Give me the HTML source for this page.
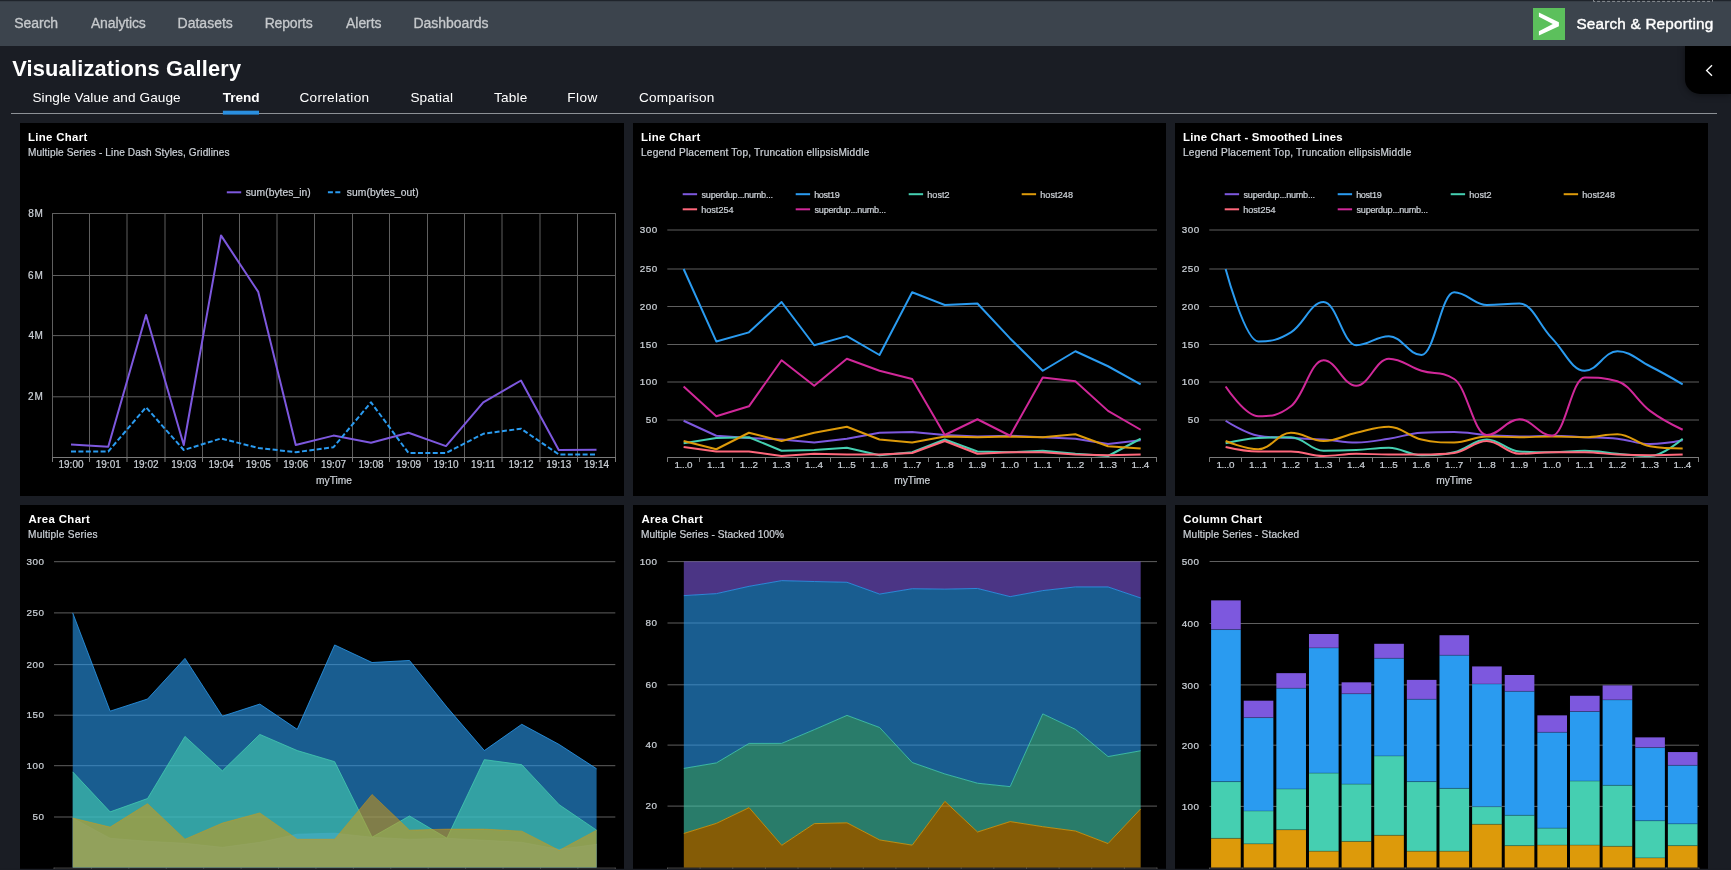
<!DOCTYPE html><html><head><meta charset="utf-8"><title>Visualizations Gallery</title><style>
html,body{margin:0;padding:0;background:#1a1d24;}
body{width:1731px;height:870px;overflow:hidden;position:relative;font-family:"Liberation Sans", sans-serif;}
svg{position:absolute;left:0;top:0;will-change:transform;}
svg text{font-family:"Liberation Sans", sans-serif;}
svg text.g{stroke:#cbd0d6;stroke-width:.22px;}
</style></head><body>
<svg width="1731" height="870" viewBox="0 0 1731 870">
<rect x="0" y="0" width="1731" height="46" fill="#3c444d"/>
<rect x="0" y="0" width="1731" height="1.2" fill="#1f242b"/>
<text x="14.37" y="28.3" font-size="14" fill="#c6c9cc" text-anchor="start" font-weight="normal" letter-spacing="-0.13" stroke="#c6c9cc" stroke-width="0.3">Search</text>
<text x="90.9" y="28.3" font-size="14" fill="#c6c9cc" text-anchor="start" font-weight="normal" letter-spacing="-0.13" stroke="#c6c9cc" stroke-width="0.3">Analytics</text>
<text x="177.58" y="28.3" font-size="14" fill="#c6c9cc" text-anchor="start" font-weight="normal" stroke="#c6c9cc" stroke-width="0.3">Datasets</text>
<text x="264.68" y="28.3" font-size="14" fill="#c6c9cc" text-anchor="start" font-weight="normal" letter-spacing="-0.17" stroke="#c6c9cc" stroke-width="0.3">Reports</text>
<text x="346.1" y="28.3" font-size="14" fill="#c6c9cc" text-anchor="start" font-weight="normal" letter-spacing="-0.08" stroke="#c6c9cc" stroke-width="0.3">Alerts</text>
<text x="413.38" y="28.3" font-size="14" fill="#c6c9cc" text-anchor="start" font-weight="normal" letter-spacing="-0.03" stroke="#c6c9cc" stroke-width="0.3">Dashboards</text>
<rect x="1533" y="8" width="32" height="32" fill="#5cc05c"/>
<path d="M1538.9 12.4 L1558.9 22.2 L1558.9 26.3 L1538.9 35.6 L1538.9 31.3 L1552.8 23.9 L1538.9 16.7 Z" fill="#ffffff"/>
<text x="1576.41" y="29.4" font-size="15.3" fill="#ffffff" text-anchor="start" font-weight="normal" letter-spacing="0.2" stroke="#ffffff" stroke-width="0.4">Search &amp; Reporting</text>
<path d="M1593.5 0 V1.4 H1712.5 V0" fill="none" stroke="#a6aaae" stroke-opacity="0.75" stroke-width="1" stroke-dasharray="3 2"/>
<defs><filter id="bl" x="-30%" y="-30%" width="160%" height="160%"><feGaussianBlur stdDeviation="3.5"/></filter><clipPath id="cpb"><rect x="1660" y="46" width="71" height="70"/></clipPath></defs>
<g clip-path="url(#cpb)"><path d="M1685 46 H1731 V95 H1700 A15 15 0 0 1 1685 80 Z" fill="#000000" fill-opacity="0.45" filter="url(#bl)"/></g>
<path d="M1685 46 H1731 V94 H1700 A15 15 0 0 1 1685 79 Z" fill="#000000"/>
<path d="M1712 65.3 L1706.6 70.5 L1712 75.7" fill="none" stroke="#ffffff" stroke-width="1.3"/>
<text x="12.19" y="75.8" font-size="21.8" fill="#ffffff" text-anchor="start" font-weight="bold" letter-spacing="0.19">Visualizations Gallery</text>
<text x="32.39" y="102.1" font-size="13.6" fill="#ffffff" text-anchor="start" font-weight="normal" letter-spacing="0.09">Single Value and Gauge</text>
<text x="222.76" y="102.1" font-size="13.6" fill="#ffffff" text-anchor="start" font-weight="bold" letter-spacing="-0.04">Trend</text>
<text x="299.42" y="102.1" font-size="13.6" fill="#ffffff" text-anchor="start" font-weight="normal" letter-spacing="0.32">Correlation</text>
<text x="410.39" y="102.1" font-size="13.6" fill="#ffffff" text-anchor="start" font-weight="normal" letter-spacing="0.17">Spatial</text>
<text x="493.93" y="102.1" font-size="13.6" fill="#ffffff" text-anchor="start" font-weight="normal" letter-spacing="0.25">Table</text>
<text x="567.31" y="102.1" font-size="13.6" fill="#ffffff" text-anchor="start" font-weight="normal" letter-spacing="0.47">Flow</text>
<text x="638.92" y="102.1" font-size="13.6" fill="#ffffff" text-anchor="start" font-weight="normal" letter-spacing="0.23">Comparison</text>
<line x1="11" x2="1717" y1="113.5" y2="113.5" stroke="#8d9196" stroke-width="1"/>
<rect x="222.9" y="110.7" width="36.1" height="3.9" fill="#2a8fe0"/>
<rect x="20" y="123" width="604" height="373" fill="#000000"/>
<text x="28.06" y="140.9" font-size="11.4" fill="#ffffff" text-anchor="start" font-weight="bold" letter-spacing="0.32">Line Chart</text>
<text class="g" x="27.99" y="156.2" font-size="10.1" fill="#cbd0d6" text-anchor="start" font-weight="normal" letter-spacing="0.12">Multiple Series - Line Dash Styles, Gridlines</text>
<rect x="633" y="123" width="533" height="373" fill="#000000"/>
<text x="641.06" y="140.9" font-size="11.4" fill="#ffffff" text-anchor="start" font-weight="bold" letter-spacing="0.32">Line Chart</text>
<text class="g" x="640.99" y="156.2" font-size="10.1" fill="#cbd0d6" text-anchor="start" font-weight="normal" letter-spacing="0.21">Legend Placement Top, Truncation ellipsisMiddle</text>
<rect x="1175" y="123" width="533" height="373" fill="#000000"/>
<text x="1183.06" y="140.9" font-size="11.4" fill="#ffffff" text-anchor="start" font-weight="bold" letter-spacing="0.17">Line Chart - Smoothed Lines</text>
<text class="g" x="1182.99" y="156.2" font-size="10.1" fill="#cbd0d6" text-anchor="start" font-weight="normal" letter-spacing="0.21">Legend Placement Top, Truncation ellipsisMiddle</text>
<rect x="20" y="505" width="604" height="380" fill="#000000"/>
<text x="28.52" y="522.9" font-size="11.4" fill="#ffffff" text-anchor="start" font-weight="bold" letter-spacing="0.35">Area Chart</text>
<text class="g" x="27.99" y="538.2" font-size="10.1" fill="#cbd0d6" text-anchor="start" font-weight="normal" letter-spacing="0.24">Multiple Series</text>
<rect x="633" y="505" width="533" height="380" fill="#000000"/>
<text x="641.51" y="522.9" font-size="11.4" fill="#ffffff" text-anchor="start" font-weight="bold" letter-spacing="0.35">Area Chart</text>
<text class="g" x="640.99" y="538.2" font-size="10.1" fill="#cbd0d6" text-anchor="start" font-weight="normal" letter-spacing="0.09">Multiple Series - Stacked 100%</text>
<rect x="1175" y="505" width="533" height="380" fill="#000000"/>
<text x="1183.34" y="522.9" font-size="11.4" fill="#ffffff" text-anchor="start" font-weight="bold" letter-spacing="0.3">Column Chart</text>
<text class="g" x="1182.99" y="538.2" font-size="10.1" fill="#cbd0d6" text-anchor="start" font-weight="normal" letter-spacing="0.19">Multiple Series - Stacked</text>
<line x1="52" x2="616" y1="213.5" y2="213.5" stroke="#5f5f5f" stroke-width="1"/>
<line x1="52" x2="616" y1="275.5" y2="275.5" stroke="#5f5f5f" stroke-width="1"/>
<line x1="52" x2="616" y1="335.6" y2="335.6" stroke="#5f5f5f" stroke-width="1"/>
<line x1="52" x2="616" y1="396.8" y2="396.8" stroke="#5f5f5f" stroke-width="1"/>
<line x1="52.5" x2="52.5" y1="213.5" y2="457.5" stroke="#5f5f5f" stroke-width="1"/>
<line x1="52.5" x2="52.5" y1="457.5" y2="462" stroke="#7a7a7a" stroke-width="1"/>
<line x1="89.5" x2="89.5" y1="213.5" y2="457.5" stroke="#5f5f5f" stroke-width="1"/>
<line x1="89.5" x2="89.5" y1="457.5" y2="462" stroke="#7a7a7a" stroke-width="1"/>
<line x1="127" x2="127" y1="213.5" y2="457.5" stroke="#5f5f5f" stroke-width="1"/>
<line x1="127" x2="127" y1="457.5" y2="462" stroke="#7a7a7a" stroke-width="1"/>
<line x1="165" x2="165" y1="213.5" y2="457.5" stroke="#5f5f5f" stroke-width="1"/>
<line x1="165" x2="165" y1="457.5" y2="462" stroke="#7a7a7a" stroke-width="1"/>
<line x1="202.5" x2="202.5" y1="213.5" y2="457.5" stroke="#5f5f5f" stroke-width="1"/>
<line x1="202.5" x2="202.5" y1="457.5" y2="462" stroke="#7a7a7a" stroke-width="1"/>
<line x1="239.5" x2="239.5" y1="213.5" y2="457.5" stroke="#5f5f5f" stroke-width="1"/>
<line x1="239.5" x2="239.5" y1="457.5" y2="462" stroke="#7a7a7a" stroke-width="1"/>
<line x1="277" x2="277" y1="213.5" y2="457.5" stroke="#5f5f5f" stroke-width="1"/>
<line x1="277" x2="277" y1="457.5" y2="462" stroke="#7a7a7a" stroke-width="1"/>
<line x1="314.5" x2="314.5" y1="213.5" y2="457.5" stroke="#5f5f5f" stroke-width="1"/>
<line x1="314.5" x2="314.5" y1="457.5" y2="462" stroke="#7a7a7a" stroke-width="1"/>
<line x1="352.5" x2="352.5" y1="213.5" y2="457.5" stroke="#5f5f5f" stroke-width="1"/>
<line x1="352.5" x2="352.5" y1="457.5" y2="462" stroke="#7a7a7a" stroke-width="1"/>
<line x1="389.5" x2="389.5" y1="213.5" y2="457.5" stroke="#5f5f5f" stroke-width="1"/>
<line x1="389.5" x2="389.5" y1="457.5" y2="462" stroke="#7a7a7a" stroke-width="1"/>
<line x1="427.5" x2="427.5" y1="213.5" y2="457.5" stroke="#5f5f5f" stroke-width="1"/>
<line x1="427.5" x2="427.5" y1="457.5" y2="462" stroke="#7a7a7a" stroke-width="1"/>
<line x1="464.5" x2="464.5" y1="213.5" y2="457.5" stroke="#5f5f5f" stroke-width="1"/>
<line x1="464.5" x2="464.5" y1="457.5" y2="462" stroke="#7a7a7a" stroke-width="1"/>
<line x1="502" x2="502" y1="213.5" y2="457.5" stroke="#5f5f5f" stroke-width="1"/>
<line x1="502" x2="502" y1="457.5" y2="462" stroke="#7a7a7a" stroke-width="1"/>
<line x1="540" x2="540" y1="213.5" y2="457.5" stroke="#5f5f5f" stroke-width="1"/>
<line x1="540" x2="540" y1="457.5" y2="462" stroke="#7a7a7a" stroke-width="1"/>
<line x1="577.5" x2="577.5" y1="213.5" y2="457.5" stroke="#5f5f5f" stroke-width="1"/>
<line x1="577.5" x2="577.5" y1="457.5" y2="462" stroke="#7a7a7a" stroke-width="1"/>
<line x1="615.5" x2="615.5" y1="213.5" y2="457.5" stroke="#5f5f5f" stroke-width="1"/>
<line x1="615.5" x2="615.5" y1="457.5" y2="462" stroke="#7a7a7a" stroke-width="1"/>
<line x1="52" x2="616" y1="457.5" y2="457.5" stroke="#7a7a7a" stroke-width="1"/>
<text class="g" x="28.2" y="217.1" font-size="10" fill="#cbd0d6" text-anchor="start" font-weight="normal" letter-spacing="0.85">8M</text>
<text class="g" x="28.1" y="279.1" font-size="10" fill="#cbd0d6" text-anchor="start" font-weight="normal" letter-spacing="0.95">6M</text>
<text class="g" x="28.4" y="339.2" font-size="10" fill="#cbd0d6" text-anchor="start" font-weight="normal" letter-spacing="0.65">4M</text>
<text class="g" x="28.1" y="400.4" font-size="10" fill="#cbd0d6" text-anchor="start" font-weight="normal" letter-spacing="0.95">2M</text>
<text class="g" x="71" y="468.1" font-size="10" fill="#cbd0d6" text-anchor="middle" font-weight="normal">19:00</text>
<text class="g" x="108.25" y="468.1" font-size="10" fill="#cbd0d6" text-anchor="middle" font-weight="normal">19:01</text>
<text class="g" x="146" y="468.1" font-size="10" fill="#cbd0d6" text-anchor="middle" font-weight="normal">19:02</text>
<text class="g" x="183.75" y="468.1" font-size="10" fill="#cbd0d6" text-anchor="middle" font-weight="normal">19:03</text>
<text class="g" x="221" y="468.1" font-size="10" fill="#cbd0d6" text-anchor="middle" font-weight="normal">19:04</text>
<text class="g" x="258.25" y="468.1" font-size="10" fill="#cbd0d6" text-anchor="middle" font-weight="normal">19:05</text>
<text class="g" x="295.75" y="468.1" font-size="10" fill="#cbd0d6" text-anchor="middle" font-weight="normal">19:06</text>
<text class="g" x="333.5" y="468.1" font-size="10" fill="#cbd0d6" text-anchor="middle" font-weight="normal">19:07</text>
<text class="g" x="371" y="468.1" font-size="10" fill="#cbd0d6" text-anchor="middle" font-weight="normal">19:08</text>
<text class="g" x="408.5" y="468.1" font-size="10" fill="#cbd0d6" text-anchor="middle" font-weight="normal">19:09</text>
<text class="g" x="446" y="468.1" font-size="10" fill="#cbd0d6" text-anchor="middle" font-weight="normal">19:10</text>
<text class="g" x="483.25" y="468.1" font-size="10" fill="#cbd0d6" text-anchor="middle" font-weight="normal">19:11</text>
<text class="g" x="521" y="468.1" font-size="10" fill="#cbd0d6" text-anchor="middle" font-weight="normal">19:12</text>
<text class="g" x="558.75" y="468.1" font-size="10" fill="#cbd0d6" text-anchor="middle" font-weight="normal">19:13</text>
<text class="g" x="596.5" y="468.1" font-size="10" fill="#cbd0d6" text-anchor="middle" font-weight="normal">19:14</text>
<text class="g" x="334" y="484.2" font-size="10.2" fill="#cbd0d6" text-anchor="middle" font-weight="normal">myTime</text>
<path d="M71 444.6 L108.25 446.8 L146 315 L183.75 445 L221 235.4 L258.25 291.9 L295.75 445 L333.5 435.6 L371 442.8 L408.5 432.7 L446 446.1 L483.25 402.3 L521 380.5 L558.75 450 L596.5 449.7" fill="none" stroke="#7d58de" stroke-width="2" stroke-linejoin="round"/>
<path d="M71 451.5 L108.25 451.5 L146 407.3 L183.75 450 L221 438.5 L258.25 447.9 L295.75 452.2 L333.5 447.2 L371 402.3 L408.5 453 L446 453 L483.25 433.8 L521 428.7 L558.75 454.4 L596.5 454.4" fill="none" stroke="#2a9bf0" stroke-width="2" stroke-dasharray="5 2.4" stroke-linejoin="round"/>
<line x1="226.8" x2="241.2" y1="192.3" y2="192.3" stroke="#7d58de" stroke-width="2"/>
<text class="g" x="245.64" y="196.2" font-size="10.3" fill="#cbd0d6" text-anchor="start" font-weight="normal" letter-spacing="0.03">sum(bytes_in)</text>
<line x1="327.9" x2="340.4" y1="192.3" y2="192.3" stroke="#2a9bf0" stroke-width="2" stroke-dasharray="5 2.4"/>
<text class="g" x="346.74" y="196.2" font-size="10.3" fill="#cbd0d6" text-anchor="start" font-weight="normal" letter-spacing="0.07">sum(bytes_out)</text>
<line x1="667.3" x2="1157" y1="420" y2="420" stroke="#5f5f5f" stroke-width="1"/>
<line x1="667.3" x2="1157" y1="382" y2="382" stroke="#5f5f5f" stroke-width="1"/>
<line x1="667.3" x2="1157" y1="344.5" y2="344.5" stroke="#5f5f5f" stroke-width="1"/>
<line x1="667.3" x2="1157" y1="306.5" y2="306.5" stroke="#5f5f5f" stroke-width="1"/>
<line x1="667.3" x2="1157" y1="269" y2="269" stroke="#5f5f5f" stroke-width="1"/>
<line x1="667.3" x2="1157" y1="230" y2="230" stroke="#5f5f5f" stroke-width="1"/>
<text class="g" x="645.81" y="423.2" font-size="9.9" fill="#cbd0d6" text-anchor="start" font-weight="normal" letter-spacing="0.45">50</text>
<text class="g" x="639.86" y="385.2" font-size="9.9" fill="#cbd0d6" text-anchor="start" font-weight="normal" letter-spacing="0.45">100</text>
<text class="g" x="639.86" y="347.7" font-size="9.9" fill="#cbd0d6" text-anchor="start" font-weight="normal" letter-spacing="0.45">150</text>
<text class="g" x="639.86" y="309.7" font-size="9.9" fill="#cbd0d6" text-anchor="start" font-weight="normal" letter-spacing="0.45">200</text>
<text class="g" x="639.86" y="272.2" font-size="9.9" fill="#cbd0d6" text-anchor="start" font-weight="normal" letter-spacing="0.45">250</text>
<text class="g" x="639.86" y="233.2" font-size="9.9" fill="#cbd0d6" text-anchor="start" font-weight="normal" letter-spacing="0.45">300</text>
<line x1="667.3" x2="1157" y1="457.5" y2="457.5" stroke="#7a7a7a" stroke-width="1"/>
<line x1="667.5" x2="667.5" y1="457.5" y2="462" stroke="#7a7a7a" stroke-width="1"/>
<line x1="699.5" x2="699.5" y1="457.5" y2="462" stroke="#7a7a7a" stroke-width="1"/>
<line x1="732.5" x2="732.5" y1="457.5" y2="462" stroke="#7a7a7a" stroke-width="1"/>
<line x1="765.5" x2="765.5" y1="457.5" y2="462" stroke="#7a7a7a" stroke-width="1"/>
<line x1="797.5" x2="797.5" y1="457.5" y2="462" stroke="#7a7a7a" stroke-width="1"/>
<line x1="830.5" x2="830.5" y1="457.5" y2="462" stroke="#7a7a7a" stroke-width="1"/>
<line x1="863.5" x2="863.5" y1="457.5" y2="462" stroke="#7a7a7a" stroke-width="1"/>
<line x1="895.5" x2="895.5" y1="457.5" y2="462" stroke="#7a7a7a" stroke-width="1"/>
<line x1="928.5" x2="928.5" y1="457.5" y2="462" stroke="#7a7a7a" stroke-width="1"/>
<line x1="961.5" x2="961.5" y1="457.5" y2="462" stroke="#7a7a7a" stroke-width="1"/>
<line x1="993.5" x2="993.5" y1="457.5" y2="462" stroke="#7a7a7a" stroke-width="1"/>
<line x1="1026.5" x2="1026.5" y1="457.5" y2="462" stroke="#7a7a7a" stroke-width="1"/>
<line x1="1059.5" x2="1059.5" y1="457.5" y2="462" stroke="#7a7a7a" stroke-width="1"/>
<line x1="1091.5" x2="1091.5" y1="457.5" y2="462" stroke="#7a7a7a" stroke-width="1"/>
<line x1="1124.5" x2="1124.5" y1="457.5" y2="462" stroke="#7a7a7a" stroke-width="1"/>
<line x1="1156.5" x2="1156.5" y1="457.5" y2="462" stroke="#7a7a7a" stroke-width="1"/>
<text class="g" x="674.38" y="467.8" font-size="9.9" fill="#cbd0d6" text-anchor="start" font-weight="normal" letter-spacing="-0.29">1...0</text>
<text class="g" x="707.03" y="467.8" font-size="9.9" fill="#cbd0d6" text-anchor="start" font-weight="normal" letter-spacing="-0.27">1...1</text>
<text class="g" x="739.67" y="467.8" font-size="9.9" fill="#cbd0d6" text-anchor="start" font-weight="normal" letter-spacing="-0.25">1...2</text>
<text class="g" x="772.32" y="467.8" font-size="9.9" fill="#cbd0d6" text-anchor="start" font-weight="normal" letter-spacing="-0.28">1...3</text>
<text class="g" x="804.97" y="467.8" font-size="9.9" fill="#cbd0d6" text-anchor="start" font-weight="normal" letter-spacing="-0.32">1...4</text>
<text class="g" x="837.61" y="467.8" font-size="9.9" fill="#cbd0d6" text-anchor="start" font-weight="normal" letter-spacing="-0.28">1...5</text>
<text class="g" x="870.26" y="467.8" font-size="9.9" fill="#cbd0d6" text-anchor="start" font-weight="normal" letter-spacing="-0.28">1...6</text>
<text class="g" x="902.91" y="467.8" font-size="9.9" fill="#cbd0d6" text-anchor="start" font-weight="normal" letter-spacing="-0.25">1...7</text>
<text class="g" x="935.55" y="467.8" font-size="9.9" fill="#cbd0d6" text-anchor="start" font-weight="normal" letter-spacing="-0.28">1...8</text>
<text class="g" x="968.2" y="467.8" font-size="9.9" fill="#cbd0d6" text-anchor="start" font-weight="normal" letter-spacing="-0.27">1...9</text>
<text class="g" x="1000.85" y="467.8" font-size="9.9" fill="#cbd0d6" text-anchor="start" font-weight="normal" letter-spacing="-0.29">1...0</text>
<text class="g" x="1033.49" y="467.8" font-size="9.9" fill="#cbd0d6" text-anchor="start" font-weight="normal" letter-spacing="-0.27">1...1</text>
<text class="g" x="1066.14" y="467.8" font-size="9.9" fill="#cbd0d6" text-anchor="start" font-weight="normal" letter-spacing="-0.25">1...2</text>
<text class="g" x="1098.79" y="467.8" font-size="9.9" fill="#cbd0d6" text-anchor="start" font-weight="normal" letter-spacing="-0.28">1...3</text>
<text class="g" x="1131.43" y="467.8" font-size="9.9" fill="#cbd0d6" text-anchor="start" font-weight="normal" letter-spacing="-0.32">1...4</text>
<text class="g" x="912.15" y="484.2" font-size="10.2" fill="#cbd0d6" text-anchor="middle" font-weight="normal">myTime</text>
<path d="M683.62 420.75 L716.27 435.75 L748.92 438 L781.56 439.5 L814.21 442.5 L846.86 438.75 L879.5 432.75 L912.15 432 L944.8 435 L977.44 436.5 L1010.09 435.75 L1042.74 437.25 L1075.38 438.75 L1108.03 444 L1140.68 440.25" fill="none" stroke="#7d58de" stroke-width="2" stroke-linejoin="round"/>
<path d="M683.62 269 L716.27 341.46 L748.92 332.34 L781.56 302 L814.21 345.25 L846.86 336.14 L879.5 355 L912.15 292.25 L944.8 305 L977.44 303.5 L1010.09 338.42 L1042.74 370.75 L1075.38 351.25 L1108.03 366.25 L1140.68 384.28" fill="none" stroke="#2a9bf0" stroke-width="2" stroke-linejoin="round"/>
<path d="M683.62 443.25 L716.27 438 L748.92 437.25 L781.56 450.75 L814.21 450 L846.86 447.75 L879.5 455.25 L912.15 452.25 L944.8 439.5 L977.44 451.5 L1010.09 452.25 L1042.74 450.75 L1075.38 453.75 L1108.03 456 L1140.68 438.75" fill="none" stroke="#45cfb1" stroke-width="2" stroke-linejoin="round"/>
<path d="M683.62 441 L716.27 449.25 L748.92 432.75 L781.56 441 L814.21 432.75 L846.86 426.75 L879.5 439.5 L912.15 442.5 L944.8 436.5 L977.44 437.25 L1010.09 436.5 L1042.74 437.25 L1075.38 434.25 L1108.03 446.25 L1140.68 448.5" fill="none" stroke="#dd9a0a" stroke-width="2" stroke-linejoin="round"/>
<path d="M683.62 447 L716.27 451.5 L748.92 451.5 L781.56 456 L814.21 453.75 L846.86 454.5 L879.5 454.5 L912.15 453 L944.8 441 L977.44 453.75 L1010.09 452.25 L1042.74 452.25 L1075.38 454.5 L1108.03 455.25 L1140.68 454.5" fill="none" stroke="#ff677b" stroke-width="2" stroke-linejoin="round"/>
<path d="M683.62 386.56 L716.27 416.2 L748.92 406.32 L781.56 360.25 L814.21 385.8 L846.86 358.75 L879.5 370.75 L912.15 379 L944.8 435 L977.44 419.24 L1010.09 435.75 L1042.74 377.5 L1075.38 381.25 L1108.03 410.88 L1140.68 429.75" fill="none" stroke="#d02899" stroke-width="2" stroke-linejoin="round"/>
<line x1="682.7" x2="697.1" y1="194.2" y2="194.2" stroke="#7d58de" stroke-width="2"/>
<text class="g" x="701.57" y="197.6" font-size="9.1" fill="#cbd0d6" text-anchor="start" font-weight="normal" letter-spacing="-0.26">superdup...numb...</text>
<line x1="795.7" x2="810.1" y1="194.2" y2="194.2" stroke="#2a9bf0" stroke-width="2"/>
<text class="g" x="814.16" y="197.6" font-size="9.1" fill="#cbd0d6" text-anchor="start" font-weight="normal" letter-spacing="-0.35">host19</text>
<line x1="908.7" x2="923.1" y1="194.2" y2="194.2" stroke="#45cfb1" stroke-width="2"/>
<text class="g" x="927.16" y="197.6" font-size="9.1" fill="#cbd0d6" text-anchor="start" font-weight="normal" letter-spacing="0.06">host2</text>
<line x1="1021.7" x2="1036.1" y1="194.2" y2="194.2" stroke="#dd9a0a" stroke-width="2"/>
<text class="g" x="1040.16" y="197.6" font-size="9.1" fill="#cbd0d6" text-anchor="start" font-weight="normal" letter-spacing="0.08">host248</text>
<line x1="682.7" x2="697.1" y1="209.3" y2="209.3" stroke="#ff677b" stroke-width="2"/>
<text class="g" x="701.16" y="212.7" font-size="9.1" fill="#cbd0d6" text-anchor="start" font-weight="normal" letter-spacing="0.01">host254</text>
<line x1="795.7" x2="810.1" y1="209.3" y2="209.3" stroke="#d02899" stroke-width="2"/>
<text class="g" x="814.57" y="212.7" font-size="9.1" fill="#cbd0d6" text-anchor="start" font-weight="normal" letter-spacing="-0.26">superdup...numb...</text>
<line x1="1209.3" x2="1699" y1="420" y2="420" stroke="#5f5f5f" stroke-width="1"/>
<line x1="1209.3" x2="1699" y1="382" y2="382" stroke="#5f5f5f" stroke-width="1"/>
<line x1="1209.3" x2="1699" y1="344.5" y2="344.5" stroke="#5f5f5f" stroke-width="1"/>
<line x1="1209.3" x2="1699" y1="306.5" y2="306.5" stroke="#5f5f5f" stroke-width="1"/>
<line x1="1209.3" x2="1699" y1="269" y2="269" stroke="#5f5f5f" stroke-width="1"/>
<line x1="1209.3" x2="1699" y1="230" y2="230" stroke="#5f5f5f" stroke-width="1"/>
<text class="g" x="1187.81" y="423.2" font-size="9.9" fill="#cbd0d6" text-anchor="start" font-weight="normal" letter-spacing="0.45">50</text>
<text class="g" x="1181.86" y="385.2" font-size="9.9" fill="#cbd0d6" text-anchor="start" font-weight="normal" letter-spacing="0.45">100</text>
<text class="g" x="1181.86" y="347.7" font-size="9.9" fill="#cbd0d6" text-anchor="start" font-weight="normal" letter-spacing="0.45">150</text>
<text class="g" x="1181.86" y="309.7" font-size="9.9" fill="#cbd0d6" text-anchor="start" font-weight="normal" letter-spacing="0.45">200</text>
<text class="g" x="1181.86" y="272.2" font-size="9.9" fill="#cbd0d6" text-anchor="start" font-weight="normal" letter-spacing="0.45">250</text>
<text class="g" x="1181.86" y="233.2" font-size="9.9" fill="#cbd0d6" text-anchor="start" font-weight="normal" letter-spacing="0.45">300</text>
<line x1="1209.3" x2="1699" y1="457.5" y2="457.5" stroke="#7a7a7a" stroke-width="1"/>
<line x1="1209.5" x2="1209.5" y1="457.5" y2="462" stroke="#7a7a7a" stroke-width="1"/>
<line x1="1241.5" x2="1241.5" y1="457.5" y2="462" stroke="#7a7a7a" stroke-width="1"/>
<line x1="1274.5" x2="1274.5" y1="457.5" y2="462" stroke="#7a7a7a" stroke-width="1"/>
<line x1="1307.5" x2="1307.5" y1="457.5" y2="462" stroke="#7a7a7a" stroke-width="1"/>
<line x1="1339.5" x2="1339.5" y1="457.5" y2="462" stroke="#7a7a7a" stroke-width="1"/>
<line x1="1372.5" x2="1372.5" y1="457.5" y2="462" stroke="#7a7a7a" stroke-width="1"/>
<line x1="1405.5" x2="1405.5" y1="457.5" y2="462" stroke="#7a7a7a" stroke-width="1"/>
<line x1="1437.5" x2="1437.5" y1="457.5" y2="462" stroke="#7a7a7a" stroke-width="1"/>
<line x1="1470.5" x2="1470.5" y1="457.5" y2="462" stroke="#7a7a7a" stroke-width="1"/>
<line x1="1503.5" x2="1503.5" y1="457.5" y2="462" stroke="#7a7a7a" stroke-width="1"/>
<line x1="1535.5" x2="1535.5" y1="457.5" y2="462" stroke="#7a7a7a" stroke-width="1"/>
<line x1="1568.5" x2="1568.5" y1="457.5" y2="462" stroke="#7a7a7a" stroke-width="1"/>
<line x1="1601.5" x2="1601.5" y1="457.5" y2="462" stroke="#7a7a7a" stroke-width="1"/>
<line x1="1633.5" x2="1633.5" y1="457.5" y2="462" stroke="#7a7a7a" stroke-width="1"/>
<line x1="1666.5" x2="1666.5" y1="457.5" y2="462" stroke="#7a7a7a" stroke-width="1"/>
<line x1="1698.5" x2="1698.5" y1="457.5" y2="462" stroke="#7a7a7a" stroke-width="1"/>
<text class="g" x="1216.38" y="467.8" font-size="9.9" fill="#cbd0d6" text-anchor="start" font-weight="normal" letter-spacing="-0.29">1...0</text>
<text class="g" x="1249.03" y="467.8" font-size="9.9" fill="#cbd0d6" text-anchor="start" font-weight="normal" letter-spacing="-0.27">1...1</text>
<text class="g" x="1281.67" y="467.8" font-size="9.9" fill="#cbd0d6" text-anchor="start" font-weight="normal" letter-spacing="-0.25">1...2</text>
<text class="g" x="1314.32" y="467.8" font-size="9.9" fill="#cbd0d6" text-anchor="start" font-weight="normal" letter-spacing="-0.28">1...3</text>
<text class="g" x="1346.97" y="467.8" font-size="9.9" fill="#cbd0d6" text-anchor="start" font-weight="normal" letter-spacing="-0.32">1...4</text>
<text class="g" x="1379.61" y="467.8" font-size="9.9" fill="#cbd0d6" text-anchor="start" font-weight="normal" letter-spacing="-0.28">1...5</text>
<text class="g" x="1412.26" y="467.8" font-size="9.9" fill="#cbd0d6" text-anchor="start" font-weight="normal" letter-spacing="-0.28">1...6</text>
<text class="g" x="1444.91" y="467.8" font-size="9.9" fill="#cbd0d6" text-anchor="start" font-weight="normal" letter-spacing="-0.25">1...7</text>
<text class="g" x="1477.55" y="467.8" font-size="9.9" fill="#cbd0d6" text-anchor="start" font-weight="normal" letter-spacing="-0.28">1...8</text>
<text class="g" x="1510.2" y="467.8" font-size="9.9" fill="#cbd0d6" text-anchor="start" font-weight="normal" letter-spacing="-0.27">1...9</text>
<text class="g" x="1542.85" y="467.8" font-size="9.9" fill="#cbd0d6" text-anchor="start" font-weight="normal" letter-spacing="-0.29">1...0</text>
<text class="g" x="1575.49" y="467.8" font-size="9.9" fill="#cbd0d6" text-anchor="start" font-weight="normal" letter-spacing="-0.27">1...1</text>
<text class="g" x="1608.14" y="467.8" font-size="9.9" fill="#cbd0d6" text-anchor="start" font-weight="normal" letter-spacing="-0.25">1...2</text>
<text class="g" x="1640.79" y="467.8" font-size="9.9" fill="#cbd0d6" text-anchor="start" font-weight="normal" letter-spacing="-0.28">1...3</text>
<text class="g" x="1673.43" y="467.8" font-size="9.9" fill="#cbd0d6" text-anchor="start" font-weight="normal" letter-spacing="-0.32">1...4</text>
<text class="g" x="1454.15" y="484.2" font-size="10.2" fill="#cbd0d6" text-anchor="middle" font-weight="normal">myTime</text>
<path d="M1225.62 420.75 C1225.62 420.75 1245.21 433.5 1258.27 435.75 C1271.33 438 1277.86 437.25 1290.92 438 C1303.98 438.75 1310.5 438.6 1323.56 439.5 C1336.62 440.4 1343.15 442.5 1356.21 442.5 C1369.27 442.5 1375.8 440.7 1388.86 438.75 C1401.92 436.8 1408.44 433.5 1421.5 432.75 C1434.56 432 1441.09 432 1454.15 432 C1467.21 432 1473.74 434.1 1486.8 435 C1499.86 435.9 1506.38 436.5 1519.44 436.5 C1532.5 436.5 1539.03 435.75 1552.09 435.75 C1565.15 435.75 1571.68 436.65 1584.74 437.25 C1597.8 437.85 1604.32 437.4 1617.38 438.75 C1630.44 440.1 1636.97 444 1650.03 444 C1663.09 444 1682.68 440.25 1682.68 440.25" fill="none" stroke="#7d58de" stroke-width="2" stroke-linejoin="round"/>
<path d="M1225.62 269 C1225.62 269 1245.21 341.46 1258.27 341.46 C1271.33 341.46 1277.86 340.23 1290.92 332.34 C1303.98 324.45 1310.5 302 1323.56 302 C1336.62 302 1343.15 345.25 1356.21 345.25 C1369.27 345.25 1375.8 336.14 1388.86 336.14 C1401.92 336.14 1408.44 355 1421.5 355 C1434.56 355 1441.09 292.25 1454.15 292.25 C1467.21 292.25 1473.74 305 1486.8 305 C1499.86 305 1506.38 303.5 1519.44 303.5 C1532.5 303.5 1539.03 324.97 1552.09 338.42 C1565.15 351.87 1571.68 370.75 1584.74 370.75 C1597.8 370.75 1604.32 351.25 1617.38 351.25 C1630.44 351.25 1636.97 359.64 1650.03 366.25 C1663.09 372.86 1682.68 384.28 1682.68 384.28" fill="none" stroke="#2a9bf0" stroke-width="2" stroke-linejoin="round"/>
<path d="M1225.62 443.25 C1225.62 443.25 1245.21 438.75 1258.27 438 C1271.33 437.25 1277.86 437.25 1290.92 437.25 C1303.98 437.25 1310.5 450.75 1323.56 450.75 C1336.62 450.75 1343.15 450.6 1356.21 450 C1369.27 449.4 1375.8 447.75 1388.86 447.75 C1401.92 447.75 1408.44 455.25 1421.5 455.25 C1434.56 455.25 1441.09 455.25 1454.15 452.25 C1467.21 449.25 1473.74 439.5 1486.8 439.5 C1499.86 439.5 1506.38 450.75 1519.44 451.5 C1532.5 452.25 1539.03 452.25 1552.09 452.25 C1565.15 452.25 1571.68 450.75 1584.74 450.75 C1597.8 450.75 1604.32 452.7 1617.38 453.75 C1630.44 454.8 1636.97 456 1650.03 456 C1663.09 456 1682.68 438.75 1682.68 438.75" fill="none" stroke="#45cfb1" stroke-width="2" stroke-linejoin="round"/>
<path d="M1225.62 441 C1225.62 441 1245.21 449.25 1258.27 449.25 C1271.33 449.25 1277.86 432.75 1290.92 432.75 C1303.98 432.75 1310.5 441 1323.56 441 C1336.62 441 1343.15 435.6 1356.21 432.75 C1369.27 429.9 1375.8 426.75 1388.86 426.75 C1401.92 426.75 1408.44 436.5 1421.5 439.5 C1434.56 442.5 1441.09 442.5 1454.15 442.5 C1467.21 442.5 1473.74 436.5 1486.8 436.5 C1499.86 436.5 1506.38 437.25 1519.44 437.25 C1532.5 437.25 1539.03 436.5 1552.09 436.5 C1565.15 436.5 1571.68 437.25 1584.74 437.25 C1597.8 437.25 1604.32 434.25 1617.38 434.25 C1630.44 434.25 1636.97 444 1650.03 446.25 C1663.09 448.5 1682.68 448.5 1682.68 448.5" fill="none" stroke="#dd9a0a" stroke-width="2" stroke-linejoin="round"/>
<path d="M1225.62 447 C1225.62 447 1245.21 451.5 1258.27 451.5 C1271.33 451.5 1277.86 451.5 1290.92 451.5 C1303.98 451.5 1310.5 456 1323.56 456 C1336.62 456 1343.15 453.75 1356.21 453.75 C1369.27 453.75 1375.8 454.5 1388.86 454.5 C1401.92 454.5 1408.44 454.5 1421.5 454.5 C1434.56 454.5 1441.09 454.5 1454.15 453 C1467.21 451.5 1473.74 441 1486.8 441 C1499.86 441 1506.38 453.75 1519.44 453.75 C1532.5 453.75 1539.03 452.25 1552.09 452.25 C1565.15 452.25 1571.68 452.25 1584.74 452.25 C1597.8 452.25 1604.32 453.9 1617.38 454.5 C1630.44 455.1 1636.97 455.25 1650.03 455.25 C1663.09 455.25 1682.68 454.5 1682.68 454.5" fill="none" stroke="#ff677b" stroke-width="2" stroke-linejoin="round"/>
<path d="M1225.62 386.56 C1225.62 386.56 1245.21 416.2 1258.27 416.2 C1271.33 416.2 1277.86 416.2 1290.92 406.32 C1303.98 396.44 1310.5 360.25 1323.56 360.25 C1336.62 360.25 1343.15 385.8 1356.21 385.8 C1369.27 385.8 1375.8 358.75 1388.86 358.75 C1401.92 358.75 1408.44 366.7 1421.5 370.75 C1434.56 374.8 1441.09 370.75 1454.15 379 C1467.21 387.25 1473.74 435 1486.8 435 C1499.86 435 1506.38 419.24 1519.44 419.24 C1532.5 419.24 1539.03 435.75 1552.09 435.75 C1565.15 435.75 1571.68 377.5 1584.74 377.5 C1597.8 377.5 1604.32 377.5 1617.38 381.25 C1630.44 385 1636.97 401.18 1650.03 410.88 C1663.09 420.58 1682.68 429.75 1682.68 429.75" fill="none" stroke="#d02899" stroke-width="2" stroke-linejoin="round"/>
<line x1="1224.7" x2="1239.1" y1="194.2" y2="194.2" stroke="#7d58de" stroke-width="2"/>
<text class="g" x="1243.57" y="197.6" font-size="9.1" fill="#cbd0d6" text-anchor="start" font-weight="normal" letter-spacing="-0.26">superdup...numb...</text>
<line x1="1337.7" x2="1352.1" y1="194.2" y2="194.2" stroke="#2a9bf0" stroke-width="2"/>
<text class="g" x="1356.16" y="197.6" font-size="9.1" fill="#cbd0d6" text-anchor="start" font-weight="normal" letter-spacing="-0.35">host19</text>
<line x1="1450.7" x2="1465.1" y1="194.2" y2="194.2" stroke="#45cfb1" stroke-width="2"/>
<text class="g" x="1469.16" y="197.6" font-size="9.1" fill="#cbd0d6" text-anchor="start" font-weight="normal" letter-spacing="0.06">host2</text>
<line x1="1563.7" x2="1578.1" y1="194.2" y2="194.2" stroke="#dd9a0a" stroke-width="2"/>
<text class="g" x="1582.16" y="197.6" font-size="9.1" fill="#cbd0d6" text-anchor="start" font-weight="normal" letter-spacing="0.08">host248</text>
<line x1="1224.7" x2="1239.1" y1="209.3" y2="209.3" stroke="#ff677b" stroke-width="2"/>
<text class="g" x="1243.16" y="212.7" font-size="9.1" fill="#cbd0d6" text-anchor="start" font-weight="normal" letter-spacing="0.01">host254</text>
<line x1="1337.7" x2="1352.1" y1="209.3" y2="209.3" stroke="#d02899" stroke-width="2"/>
<text class="g" x="1356.57" y="212.7" font-size="9.1" fill="#cbd0d6" text-anchor="start" font-weight="normal" letter-spacing="-0.26">superdup...numb...</text>
<line x1="54" x2="615.3" y1="817" y2="817" stroke="#5f5f5f" stroke-width="1"/>
<line x1="54" x2="615.3" y1="765.7" y2="765.7" stroke="#5f5f5f" stroke-width="1"/>
<line x1="54" x2="615.3" y1="715.2" y2="715.2" stroke="#5f5f5f" stroke-width="1"/>
<line x1="54" x2="615.3" y1="664.6" y2="664.6" stroke="#5f5f5f" stroke-width="1"/>
<line x1="54" x2="615.3" y1="612.9" y2="612.9" stroke="#5f5f5f" stroke-width="1"/>
<line x1="54" x2="615.3" y1="561.7" y2="561.7" stroke="#5f5f5f" stroke-width="1"/>
<text class="g" x="32.51" y="820" font-size="9.9" fill="#cbd0d6" text-anchor="start" font-weight="normal" letter-spacing="0.45">50</text>
<text class="g" x="26.56" y="768.7" font-size="9.9" fill="#cbd0d6" text-anchor="start" font-weight="normal" letter-spacing="0.45">100</text>
<text class="g" x="26.56" y="718.2" font-size="9.9" fill="#cbd0d6" text-anchor="start" font-weight="normal" letter-spacing="0.45">150</text>
<text class="g" x="26.56" y="667.6" font-size="9.9" fill="#cbd0d6" text-anchor="start" font-weight="normal" letter-spacing="0.45">200</text>
<text class="g" x="26.56" y="615.9" font-size="9.9" fill="#cbd0d6" text-anchor="start" font-weight="normal" letter-spacing="0.45">250</text>
<text class="g" x="26.56" y="564.7" font-size="9.9" fill="#cbd0d6" text-anchor="start" font-weight="normal" letter-spacing="0.45">300</text>
<line x1="54" x2="615.3" y1="868.1" y2="868.1" stroke="#4c4c4c" stroke-width="1"/>
<line x1="54" x2="54" y1="867.6" y2="870" stroke="#5a5a5a" stroke-width="1"/>
<line x1="91.42" x2="91.42" y1="867.6" y2="870" stroke="#5a5a5a" stroke-width="1"/>
<line x1="128.84" x2="128.84" y1="867.6" y2="870" stroke="#5a5a5a" stroke-width="1"/>
<line x1="166.26" x2="166.26" y1="867.6" y2="870" stroke="#5a5a5a" stroke-width="1"/>
<line x1="203.68" x2="203.68" y1="867.6" y2="870" stroke="#5a5a5a" stroke-width="1"/>
<line x1="241.1" x2="241.1" y1="867.6" y2="870" stroke="#5a5a5a" stroke-width="1"/>
<line x1="278.52" x2="278.52" y1="867.6" y2="870" stroke="#5a5a5a" stroke-width="1"/>
<line x1="315.94" x2="315.94" y1="867.6" y2="870" stroke="#5a5a5a" stroke-width="1"/>
<line x1="353.36" x2="353.36" y1="867.6" y2="870" stroke="#5a5a5a" stroke-width="1"/>
<line x1="390.78" x2="390.78" y1="867.6" y2="870" stroke="#5a5a5a" stroke-width="1"/>
<line x1="428.2" x2="428.2" y1="867.6" y2="870" stroke="#5a5a5a" stroke-width="1"/>
<line x1="465.62" x2="465.62" y1="867.6" y2="870" stroke="#5a5a5a" stroke-width="1"/>
<line x1="503.04" x2="503.04" y1="867.6" y2="870" stroke="#5a5a5a" stroke-width="1"/>
<line x1="540.46" x2="540.46" y1="867.6" y2="870" stroke="#5a5a5a" stroke-width="1"/>
<line x1="577.88" x2="577.88" y1="867.6" y2="870" stroke="#5a5a5a" stroke-width="1"/>
<line x1="615.3" x2="615.3" y1="867.6" y2="870" stroke="#5a5a5a" stroke-width="1"/>
<path d="M72.71 818.01 L110.13 838.21 L147.55 841.24 L184.97 843.26 L222.39 847.3 L259.81 842.25 L297.23 834.17 L334.65 833.16 L372.07 837.2 L409.49 839.22 L446.91 838.21 L484.33 840.23 L521.75 842.25 L559.17 849.32 L596.59 844.27 L596.59 867.5 L72.71 867.5 Z" fill="#7d58de" fill-opacity="0.6"/>
<path d="M72.71 818.01 L110.13 838.21 L147.55 841.24 L184.97 843.26 L222.39 847.3 L259.81 842.25 L297.23 834.17 L334.65 833.16 L372.07 837.2 L409.49 839.22 L446.91 838.21 L484.33 840.23 L521.75 842.25 L559.17 849.32 L596.59 844.27" fill="none" stroke="#7d58de" stroke-width="1" stroke-opacity="0.5"/>
<path d="M72.71 612.9 L110.13 711.15 L147.55 699.01 L184.97 658.4 L222.39 716.21 L259.81 704.07 L297.23 729.34 L334.65 644.95 L372.07 662.53 L409.49 660.46 L446.91 707.1 L484.33 750.55 L521.75 724.29 L559.17 744.49 L596.59 768.78 L596.59 867.5 L72.71 867.5 Z" fill="#2a9bf0" fill-opacity="0.6"/>
<path d="M72.71 612.9 L110.13 711.15 L147.55 699.01 L184.97 658.4 L222.39 716.21 L259.81 704.07 L297.23 729.34 L334.65 644.95 L372.07 662.53 L409.49 660.46 L446.91 707.1 L484.33 750.55 L521.75 724.29 L559.17 744.49 L596.59 768.78" fill="none" stroke="#2a9bf0" stroke-width="1" stroke-opacity="0.8"/>
<path d="M72.71 771.86 L110.13 811.87 L147.55 798.53 L184.97 736.41 L222.39 770.83 L259.81 734.39 L297.23 750.55 L334.65 761.66 L372.07 837.2 L409.49 815.97 L446.91 838.21 L484.33 759.64 L521.75 764.69 L559.17 804.69 L596.59 830.13 L596.59 867.5 L72.71 867.5 Z" fill="#45cfb1" fill-opacity="0.6"/>
<path d="M72.71 771.86 L110.13 811.87 L147.55 798.53 L184.97 736.41 L222.39 770.83 L259.81 734.39 L297.23 750.55 L334.65 761.66 L372.07 837.2 L409.49 815.97 L446.91 838.21 L484.33 759.64 L521.75 764.69 L559.17 804.69 L596.59 830.13" fill="none" stroke="#45cfb1" stroke-width="1" stroke-opacity="0.75"/>
<path d="M72.71 818.01 L110.13 827.1 L147.55 803.66 L184.97 839.22 L222.39 823.06 L259.81 812.9 L297.23 839.22 L334.65 839.22 L372.07 794.43 L409.49 830.13 L446.91 829.12 L484.33 829.12 L521.75 831.14 L559.17 850.33 L596.59 830.13 L596.59 867.5 L72.71 867.5 Z" fill="#dd9a0a" fill-opacity="0.53"/>
<path d="M72.71 818.01 L110.13 827.1 L147.55 803.66 L184.97 839.22 L222.39 823.06 L259.81 812.9 L297.23 839.22 L334.65 839.22 L372.07 794.43 L409.49 830.13 L446.91 829.12 L484.33 829.12 L521.75 831.14 L559.17 850.33 L596.59 830.13" fill="none" stroke="#dd9a0a" stroke-width="1" stroke-opacity="0.45"/>
<line x1="667.5" x2="1157" y1="806.1" y2="806.1" stroke="#5f5f5f" stroke-width="1"/>
<line x1="667.5" x2="1157" y1="745.1" y2="745.1" stroke="#5f5f5f" stroke-width="1"/>
<line x1="667.5" x2="1157" y1="684.8" y2="684.8" stroke="#5f5f5f" stroke-width="1"/>
<line x1="667.5" x2="1157" y1="623" y2="623" stroke="#5f5f5f" stroke-width="1"/>
<line x1="667.5" x2="1157" y1="561.6" y2="561.6" stroke="#5f5f5f" stroke-width="1"/>
<text class="g" x="645.61" y="809.3" font-size="9.9" fill="#cbd0d6" text-anchor="start" font-weight="normal" letter-spacing="0.45">20</text>
<text class="g" x="645.61" y="748.3" font-size="9.9" fill="#cbd0d6" text-anchor="start" font-weight="normal" letter-spacing="0.45">40</text>
<text class="g" x="645.61" y="688" font-size="9.9" fill="#cbd0d6" text-anchor="start" font-weight="normal" letter-spacing="0.45">60</text>
<text class="g" x="645.61" y="626.2" font-size="9.9" fill="#cbd0d6" text-anchor="start" font-weight="normal" letter-spacing="0.45">80</text>
<text class="g" x="639.66" y="564.8" font-size="9.9" fill="#cbd0d6" text-anchor="start" font-weight="normal" letter-spacing="0.45">100</text>
<line x1="667.5" x2="1157" y1="868.1" y2="868.1" stroke="#4c4c4c" stroke-width="1"/>
<line x1="667.5" x2="667.5" y1="867.6" y2="870" stroke="#5a5a5a" stroke-width="1"/>
<line x1="700.13" x2="700.13" y1="867.6" y2="870" stroke="#5a5a5a" stroke-width="1"/>
<line x1="732.77" x2="732.77" y1="867.6" y2="870" stroke="#5a5a5a" stroke-width="1"/>
<line x1="765.4" x2="765.4" y1="867.6" y2="870" stroke="#5a5a5a" stroke-width="1"/>
<line x1="798.03" x2="798.03" y1="867.6" y2="870" stroke="#5a5a5a" stroke-width="1"/>
<line x1="830.67" x2="830.67" y1="867.6" y2="870" stroke="#5a5a5a" stroke-width="1"/>
<line x1="863.3" x2="863.3" y1="867.6" y2="870" stroke="#5a5a5a" stroke-width="1"/>
<line x1="895.93" x2="895.93" y1="867.6" y2="870" stroke="#5a5a5a" stroke-width="1"/>
<line x1="928.57" x2="928.57" y1="867.6" y2="870" stroke="#5a5a5a" stroke-width="1"/>
<line x1="961.2" x2="961.2" y1="867.6" y2="870" stroke="#5a5a5a" stroke-width="1"/>
<line x1="993.83" x2="993.83" y1="867.6" y2="870" stroke="#5a5a5a" stroke-width="1"/>
<line x1="1026.47" x2="1026.47" y1="867.6" y2="870" stroke="#5a5a5a" stroke-width="1"/>
<line x1="1059.1" x2="1059.1" y1="867.6" y2="870" stroke="#5a5a5a" stroke-width="1"/>
<line x1="1091.73" x2="1091.73" y1="867.6" y2="870" stroke="#5a5a5a" stroke-width="1"/>
<line x1="1124.37" x2="1124.37" y1="867.6" y2="870" stroke="#5a5a5a" stroke-width="1"/>
<line x1="1157" x2="1157" y1="867.6" y2="870" stroke="#5a5a5a" stroke-width="1"/>
<path d="M683.82 833.47 L716.45 823.33 L749.08 807.62 L781.72 845.29 L814.35 823.64 L846.98 822.82 L879.62 839.95 L912.25 845.17 L944.88 801.35 L977.52 832 L1010.15 821.57 L1042.78 826.71 L1075.42 831.02 L1108.05 843.56 L1140.68 808.95 L1140.68 867.5 L1108.05 867.5 L1075.42 867.5 L1042.78 867.5 L1010.15 867.5 L977.52 867.5 L944.88 867.5 L912.25 867.5 L879.62 867.5 L846.98 867.5 L814.35 867.5 L781.72 867.5 L749.08 867.5 L716.45 867.5 L683.82 867.5 Z" fill="#dd9a0a" fill-opacity="0.6"/>
<path d="M683.82 768.42 L716.45 762.87 L749.08 743.42 L781.72 743.39 L814.35 729.63 L846.98 715.36 L879.62 727.51 L912.25 762.53 L944.88 773.96 L977.52 783.23 L1010.15 786.65 L1042.78 713.9 L1075.42 729.38 L1108.05 756.57 L1140.68 750.76 L1140.68 808.95 L1108.05 843.56 L1075.42 831.02 L1042.78 826.71 L1010.15 821.57 L977.52 832 L944.88 801.35 L912.25 845.17 L879.62 839.95 L846.98 822.82 L814.35 823.64 L781.72 845.29 L749.08 807.62 L716.45 823.33 L683.82 833.47 Z" fill="#45cfb1" fill-opacity="0.6"/>
<path d="M683.82 595.63 L716.45 593.63 L749.08 586.31 L781.72 580.64 L814.35 581.54 L846.98 582.29 L879.62 594.07 L912.25 588.71 L944.88 589.17 L977.52 588.46 L1010.15 596.65 L1042.78 590.58 L1075.42 586.93 L1108.05 586.95 L1140.68 598 L1140.68 750.76 L1108.05 756.57 L1075.42 729.38 L1042.78 713.9 L1010.15 786.65 L977.52 783.23 L944.88 773.96 L912.25 762.53 L879.62 727.51 L846.98 715.36 L814.35 729.63 L781.72 743.39 L749.08 743.42 L716.45 762.87 L683.82 768.42 Z" fill="#2a9bf0" fill-opacity="0.6"/>
<path d="M683.82 561.6 L716.45 561.6 L749.08 561.6 L781.72 561.6 L814.35 561.6 L846.98 561.6 L879.62 561.6 L912.25 561.6 L944.88 561.6 L977.52 561.6 L1010.15 561.6 L1042.78 561.6 L1075.42 561.6 L1108.05 561.6 L1140.68 561.6 L1140.68 598 L1108.05 586.95 L1075.42 586.93 L1042.78 590.58 L1010.15 596.65 L977.52 588.46 L944.88 589.17 L912.25 588.71 L879.62 594.07 L846.98 582.29 L814.35 581.54 L781.72 580.64 L749.08 586.31 L716.45 593.63 L683.82 595.63 Z" fill="#7d58de" fill-opacity="0.6"/>
<path d="M683.82 833.47 L716.45 823.33 L749.08 807.62 L781.72 845.29 L814.35 823.64 L846.98 822.82 L879.62 839.95 L912.25 845.17 L944.88 801.35 L977.52 832 L1010.15 821.57 L1042.78 826.71 L1075.42 831.02 L1108.05 843.56 L1140.68 808.95" fill="none" stroke="#dd9a0a" stroke-width="1" stroke-opacity="0.8"/>
<path d="M683.82 768.42 L716.45 762.87 L749.08 743.42 L781.72 743.39 L814.35 729.63 L846.98 715.36 L879.62 727.51 L912.25 762.53 L944.88 773.96 L977.52 783.23 L1010.15 786.65 L1042.78 713.9 L1075.42 729.38 L1108.05 756.57 L1140.68 750.76" fill="none" stroke="#45cfb1" stroke-width="1" stroke-opacity="0.8"/>
<path d="M683.82 595.63 L716.45 593.63 L749.08 586.31 L781.72 580.64 L814.35 581.54 L846.98 582.29 L879.62 594.07 L912.25 588.71 L944.88 589.17 L977.52 588.46 L1010.15 596.65 L1042.78 590.58 L1075.42 586.93 L1108.05 586.95 L1140.68 598" fill="none" stroke="#2a9bf0" stroke-width="1" stroke-opacity="0.8"/>
<line x1="1209.6" x2="1699" y1="806.4" y2="806.4" stroke="#5f5f5f" stroke-width="1"/>
<line x1="1209.6" x2="1699" y1="745.2" y2="745.2" stroke="#5f5f5f" stroke-width="1"/>
<line x1="1209.6" x2="1699" y1="684.9" y2="684.9" stroke="#5f5f5f" stroke-width="1"/>
<line x1="1209.6" x2="1699" y1="623.5" y2="623.5" stroke="#5f5f5f" stroke-width="1"/>
<line x1="1209.6" x2="1699" y1="561.5" y2="561.5" stroke="#5f5f5f" stroke-width="1"/>
<text class="g" x="1181.66" y="810.3" font-size="9.9" fill="#cbd0d6" text-anchor="start" font-weight="normal" letter-spacing="0.45">100</text>
<text class="g" x="1181.66" y="749.1" font-size="9.9" fill="#cbd0d6" text-anchor="start" font-weight="normal" letter-spacing="0.45">200</text>
<text class="g" x="1181.66" y="688.8" font-size="9.9" fill="#cbd0d6" text-anchor="start" font-weight="normal" letter-spacing="0.45">300</text>
<text class="g" x="1181.66" y="627.4" font-size="9.9" fill="#cbd0d6" text-anchor="start" font-weight="normal" letter-spacing="0.45">400</text>
<text class="g" x="1181.66" y="565.4" font-size="9.9" fill="#cbd0d6" text-anchor="start" font-weight="normal" letter-spacing="0.45">500</text>
<line x1="1209.6" x2="1699" y1="868.1" y2="868.1" stroke="#4c4c4c" stroke-width="1"/>
<line x1="1209.6" x2="1209.6" y1="867.6" y2="870" stroke="#5a5a5a" stroke-width="1"/>
<line x1="1242.23" x2="1242.23" y1="867.6" y2="870" stroke="#5a5a5a" stroke-width="1"/>
<line x1="1274.85" x2="1274.85" y1="867.6" y2="870" stroke="#5a5a5a" stroke-width="1"/>
<line x1="1307.48" x2="1307.48" y1="867.6" y2="870" stroke="#5a5a5a" stroke-width="1"/>
<line x1="1340.11" x2="1340.11" y1="867.6" y2="870" stroke="#5a5a5a" stroke-width="1"/>
<line x1="1372.73" x2="1372.73" y1="867.6" y2="870" stroke="#5a5a5a" stroke-width="1"/>
<line x1="1405.36" x2="1405.36" y1="867.6" y2="870" stroke="#5a5a5a" stroke-width="1"/>
<line x1="1437.99" x2="1437.99" y1="867.6" y2="870" stroke="#5a5a5a" stroke-width="1"/>
<line x1="1470.61" x2="1470.61" y1="867.6" y2="870" stroke="#5a5a5a" stroke-width="1"/>
<line x1="1503.24" x2="1503.24" y1="867.6" y2="870" stroke="#5a5a5a" stroke-width="1"/>
<line x1="1535.87" x2="1535.87" y1="867.6" y2="870" stroke="#5a5a5a" stroke-width="1"/>
<line x1="1568.49" x2="1568.49" y1="867.6" y2="870" stroke="#5a5a5a" stroke-width="1"/>
<line x1="1601.12" x2="1601.12" y1="867.6" y2="870" stroke="#5a5a5a" stroke-width="1"/>
<line x1="1633.75" x2="1633.75" y1="867.6" y2="870" stroke="#5a5a5a" stroke-width="1"/>
<line x1="1666.37" x2="1666.37" y1="867.6" y2="870" stroke="#5a5a5a" stroke-width="1"/>
<line x1="1699" x2="1699" y1="867.6" y2="870" stroke="#5a5a5a" stroke-width="1"/>
<rect x="1211.1" y="838.33" width="29.63" height="29.17" fill="#dd9a0a"/>
<rect x="1211.1" y="781.64" width="29.63" height="56.69" fill="#45cfb1"/>
<rect x="1211.1" y="837.83" width="29.63" height="1" fill="#000" fill-opacity="0.22"/>
<rect x="1211.1" y="629.54" width="29.63" height="152.1" fill="#2a9bf0"/>
<rect x="1211.1" y="781.14" width="29.63" height="1" fill="#000" fill-opacity="0.22"/>
<rect x="1211.1" y="600.37" width="29.63" height="29.17" fill="#7d58de"/>
<rect x="1211.1" y="629.04" width="29.63" height="1" fill="#000" fill-opacity="0.22"/>
<rect x="1243.73" y="843.84" width="29.63" height="23.66" fill="#dd9a0a"/>
<rect x="1243.73" y="811" width="29.63" height="32.84" fill="#45cfb1"/>
<rect x="1243.73" y="843.34" width="29.63" height="1" fill="#000" fill-opacity="0.22"/>
<rect x="1243.73" y="717.61" width="29.63" height="93.39" fill="#2a9bf0"/>
<rect x="1243.73" y="810.5" width="29.63" height="1" fill="#000" fill-opacity="0.22"/>
<rect x="1243.73" y="700.68" width="29.63" height="16.94" fill="#7d58de"/>
<rect x="1243.73" y="717.11" width="29.63" height="1" fill="#000" fill-opacity="0.22"/>
<rect x="1276.35" y="829.77" width="29.63" height="37.73" fill="#dd9a0a"/>
<rect x="1276.35" y="788.98" width="29.63" height="40.79" fill="#45cfb1"/>
<rect x="1276.35" y="829.27" width="29.63" height="1" fill="#000" fill-opacity="0.22"/>
<rect x="1276.35" y="688.25" width="29.63" height="100.73" fill="#2a9bf0"/>
<rect x="1276.35" y="788.48" width="29.63" height="1" fill="#000" fill-opacity="0.22"/>
<rect x="1276.35" y="673.15" width="29.63" height="15.1" fill="#7d58de"/>
<rect x="1276.35" y="687.75" width="29.63" height="1" fill="#000" fill-opacity="0.22"/>
<rect x="1308.98" y="851.18" width="29.63" height="16.32" fill="#dd9a0a"/>
<rect x="1308.98" y="773.08" width="29.63" height="78.1" fill="#45cfb1"/>
<rect x="1308.98" y="850.68" width="29.63" height="1" fill="#000" fill-opacity="0.22"/>
<rect x="1308.98" y="647.89" width="29.63" height="125.19" fill="#2a9bf0"/>
<rect x="1308.98" y="772.58" width="29.63" height="1" fill="#000" fill-opacity="0.22"/>
<rect x="1308.98" y="634.01" width="29.63" height="13.88" fill="#7d58de"/>
<rect x="1308.98" y="647.39" width="29.63" height="1" fill="#000" fill-opacity="0.22"/>
<rect x="1341.61" y="841.39" width="29.63" height="26.11" fill="#dd9a0a"/>
<rect x="1341.61" y="784.09" width="29.63" height="57.3" fill="#45cfb1"/>
<rect x="1341.61" y="840.89" width="29.63" height="1" fill="#000" fill-opacity="0.22"/>
<rect x="1341.61" y="693.76" width="29.63" height="90.33" fill="#2a9bf0"/>
<rect x="1341.61" y="783.59" width="29.63" height="1" fill="#000" fill-opacity="0.22"/>
<rect x="1341.61" y="682.33" width="29.63" height="11.43" fill="#7d58de"/>
<rect x="1341.61" y="693.26" width="29.63" height="1" fill="#000" fill-opacity="0.22"/>
<rect x="1374.23" y="835.27" width="29.63" height="32.23" fill="#dd9a0a"/>
<rect x="1374.23" y="755.95" width="29.63" height="79.32" fill="#45cfb1"/>
<rect x="1374.23" y="834.77" width="29.63" height="1" fill="#000" fill-opacity="0.22"/>
<rect x="1374.23" y="658.29" width="29.63" height="97.67" fill="#2a9bf0"/>
<rect x="1374.23" y="755.45" width="29.63" height="1" fill="#000" fill-opacity="0.22"/>
<rect x="1374.23" y="643.8" width="29.63" height="14.49" fill="#7d58de"/>
<rect x="1374.23" y="657.79" width="29.63" height="1" fill="#000" fill-opacity="0.22"/>
<rect x="1406.86" y="851.18" width="29.63" height="16.32" fill="#dd9a0a"/>
<rect x="1406.86" y="781.64" width="29.63" height="69.53" fill="#45cfb1"/>
<rect x="1406.86" y="850.68" width="29.63" height="1" fill="#000" fill-opacity="0.22"/>
<rect x="1406.86" y="699.26" width="29.63" height="82.38" fill="#2a9bf0"/>
<rect x="1406.86" y="781.14" width="29.63" height="1" fill="#000" fill-opacity="0.22"/>
<rect x="1406.86" y="679.88" width="29.63" height="19.38" fill="#7d58de"/>
<rect x="1406.86" y="698.76" width="29.63" height="1" fill="#000" fill-opacity="0.22"/>
<rect x="1439.49" y="851.18" width="29.63" height="16.32" fill="#dd9a0a"/>
<rect x="1439.49" y="788.37" width="29.63" height="62.81" fill="#45cfb1"/>
<rect x="1439.49" y="850.68" width="29.63" height="1" fill="#000" fill-opacity="0.22"/>
<rect x="1439.49" y="655.23" width="29.63" height="133.14" fill="#2a9bf0"/>
<rect x="1439.49" y="787.87" width="29.63" height="1" fill="#000" fill-opacity="0.22"/>
<rect x="1439.49" y="635.23" width="29.63" height="19.99" fill="#7d58de"/>
<rect x="1439.49" y="654.73" width="29.63" height="1" fill="#000" fill-opacity="0.22"/>
<rect x="1472.11" y="824.26" width="29.63" height="43.24" fill="#dd9a0a"/>
<rect x="1472.11" y="806.72" width="29.63" height="17.55" fill="#45cfb1"/>
<rect x="1472.11" y="823.76" width="29.63" height="1" fill="#000" fill-opacity="0.22"/>
<rect x="1472.11" y="683.97" width="29.63" height="122.74" fill="#2a9bf0"/>
<rect x="1472.11" y="806.22" width="29.63" height="1" fill="#000" fill-opacity="0.22"/>
<rect x="1472.11" y="666.43" width="29.63" height="17.55" fill="#7d58de"/>
<rect x="1472.11" y="683.47" width="29.63" height="1" fill="#000" fill-opacity="0.22"/>
<rect x="1504.74" y="845.67" width="29.63" height="21.83" fill="#dd9a0a"/>
<rect x="1504.74" y="815.28" width="29.63" height="30.39" fill="#45cfb1"/>
<rect x="1504.74" y="845.17" width="29.63" height="1" fill="#000" fill-opacity="0.22"/>
<rect x="1504.74" y="691.31" width="29.63" height="123.97" fill="#2a9bf0"/>
<rect x="1504.74" y="814.78" width="29.63" height="1" fill="#000" fill-opacity="0.22"/>
<rect x="1504.74" y="674.99" width="29.63" height="16.32" fill="#7d58de"/>
<rect x="1504.74" y="690.81" width="29.63" height="1" fill="#000" fill-opacity="0.22"/>
<rect x="1537.37" y="845.06" width="29.63" height="22.44" fill="#dd9a0a"/>
<rect x="1537.37" y="828.12" width="29.63" height="16.94" fill="#45cfb1"/>
<rect x="1537.37" y="844.56" width="29.63" height="1" fill="#000" fill-opacity="0.22"/>
<rect x="1537.37" y="732.29" width="29.63" height="95.83" fill="#2a9bf0"/>
<rect x="1537.37" y="827.62" width="29.63" height="1" fill="#000" fill-opacity="0.22"/>
<rect x="1537.37" y="715.35" width="29.63" height="16.94" fill="#7d58de"/>
<rect x="1537.37" y="731.79" width="29.63" height="1" fill="#000" fill-opacity="0.22"/>
<rect x="1569.99" y="845.06" width="29.63" height="22.44" fill="#dd9a0a"/>
<rect x="1569.99" y="781.03" width="29.63" height="64.03" fill="#45cfb1"/>
<rect x="1569.99" y="844.56" width="29.63" height="1" fill="#000" fill-opacity="0.22"/>
<rect x="1569.99" y="711.5" width="29.63" height="69.53" fill="#2a9bf0"/>
<rect x="1569.99" y="780.53" width="29.63" height="1" fill="#000" fill-opacity="0.22"/>
<rect x="1569.99" y="695.78" width="29.63" height="15.71" fill="#7d58de"/>
<rect x="1569.99" y="711" width="29.63" height="1" fill="#000" fill-opacity="0.22"/>
<rect x="1602.62" y="846.28" width="29.63" height="21.22" fill="#dd9a0a"/>
<rect x="1602.62" y="785.31" width="29.63" height="60.97" fill="#45cfb1"/>
<rect x="1602.62" y="845.78" width="29.63" height="1" fill="#000" fill-opacity="0.22"/>
<rect x="1602.62" y="699.88" width="29.63" height="85.44" fill="#2a9bf0"/>
<rect x="1602.62" y="784.81" width="29.63" height="1" fill="#000" fill-opacity="0.22"/>
<rect x="1602.62" y="685.39" width="29.63" height="14.49" fill="#7d58de"/>
<rect x="1602.62" y="699.38" width="29.63" height="1" fill="#000" fill-opacity="0.22"/>
<rect x="1635.25" y="857.9" width="29.63" height="9.6" fill="#dd9a0a"/>
<rect x="1635.25" y="820.78" width="29.63" height="37.12" fill="#45cfb1"/>
<rect x="1635.25" y="857.4" width="29.63" height="1" fill="#000" fill-opacity="0.22"/>
<rect x="1635.25" y="747.58" width="29.63" height="73.2" fill="#2a9bf0"/>
<rect x="1635.25" y="820.28" width="29.63" height="1" fill="#000" fill-opacity="0.22"/>
<rect x="1635.25" y="737.37" width="29.63" height="10.21" fill="#7d58de"/>
<rect x="1635.25" y="747.08" width="29.63" height="1" fill="#000" fill-opacity="0.22"/>
<rect x="1667.87" y="845.67" width="29.63" height="21.83" fill="#dd9a0a"/>
<rect x="1667.87" y="823.84" width="29.63" height="21.83" fill="#45cfb1"/>
<rect x="1667.87" y="845.17" width="29.63" height="1" fill="#000" fill-opacity="0.22"/>
<rect x="1667.87" y="765.32" width="29.63" height="58.53" fill="#2a9bf0"/>
<rect x="1667.87" y="823.34" width="29.63" height="1" fill="#000" fill-opacity="0.22"/>
<rect x="1667.87" y="752.05" width="29.63" height="13.27" fill="#7d58de"/>
<rect x="1667.87" y="764.82" width="29.63" height="1" fill="#000" fill-opacity="0.22"/>
<rect x="0" y="868.8" width="1731" height="1.2" fill="#1a1d24"/>
</svg></body></html>
